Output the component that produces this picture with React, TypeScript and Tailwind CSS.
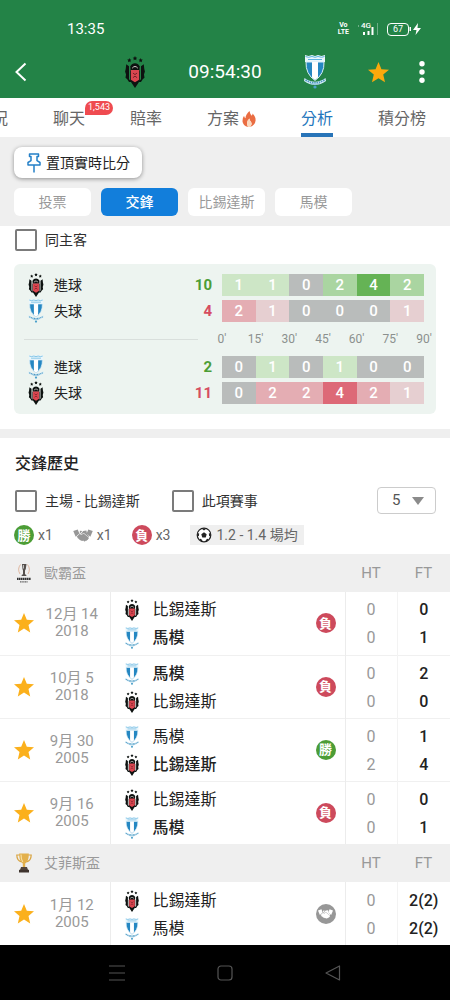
import React, { useState } from "react";

type Team = "bjk" | "mff";
type Result = "win" | "draw" | "loss";

interface Match {
  date: string;
  year: string;
  teams: [Team, Team];
  winner: Team | null;
  result: Result;
  ht: [string, string];
  ft: [string, string];
}

const teamNames: Record<Team, string> = {
  bjk: "比錫達斯",
  mff: "馬模",
};

const tabs = ["賽況", "聊天", "賠率", "方案", "分析", "積分榜"];
const chips = ["投票", "交鋒", "比錫達斯", "馬模"];

const goalColors: Record<number, string> = {
  0: "bg-[#b9bcbb]",
  1: "bg-[#cde6c6]",
  2: "bg-[#aad5a1]",
  4: "bg-[#65b355]",
};

const concededColors: Record<number, string> = {
  0: "bg-[#b9bcbb]",
  1: "bg-[#e6cfd1]",
  2: "bg-[#e4adb3]",
  4: "bg-[#dd6977]",
};

const leagues: { name: string; icon: React.ReactNode; matches: Match[] }[] = [
  {
    name: "歐霸盃",
    icon: <EuropaIcon />,
    matches: [
      { date: "12月 14", year: "2018", teams: ["bjk", "mff"], winner: "mff", result: "loss", ht: ["0", "0"], ft: ["0", "1"] },
      { date: "10月 5", year: "2018", teams: ["mff", "bjk"], winner: "mff", result: "loss", ht: ["0", "0"], ft: ["2", "0"] },
      { date: "9月 30", year: "2005", teams: ["mff", "bjk"], winner: "bjk", result: "win", ht: ["0", "2"], ft: ["1", "4"] },
      { date: "9月 16", year: "2005", teams: ["bjk", "mff"], winner: "mff", result: "loss", ht: ["0", "0"], ft: ["0", "1"] },
    ],
  },
  {
    name: "艾菲斯盃",
    icon: <TrophyIcon />,
    matches: [
      { date: "1月 12", year: "2005", teams: ["bjk", "mff"], winner: null, result: "draw", ht: ["0", "0"], ft: ["2(2)", "2(2)"] },
    ],
  },
];

function Crest({ team, className }: { team: Team; className: string }) {
  if (team === "bjk") {
    return (
      <svg viewBox="0 0 20 31" className={className} aria-hidden="true">
        <g fill="#0d1210">
          <path d="M4.500 2l.6 1.300 1.400.2-1 1 .2 1.500-1.200-.7-1.300.7.3-1.500-1-1 1.400-.2z" />
          <path d="M10 0l.7 1.400 1.500.2-1.100 1.100.3 1.500L10 3.500l-1.400.7.3-1.500-1.100-1.100 1.500-.2z" />
          <path d="M15.500 2l.6 1.300 1.400.2-1 1 .2 1.500-1.200-.7-1.300.7.3-1.500-1-1 1.400-.2z" />
          <path d="M1.500 8l2.700 2v12.500l2.800 2.800H4.200L2.500 22.500.8 21l.5-3-.9-3 .6-2.500z" />
          <path d="M18.500 8l-2.700 2v12.500l-2.800 2.800h2.800l1.700-2.800 1.700-1.500-.5-3 .9-3-.6-2.500z" />
          <path d="M5.500 10Q7 7 10 7t4.500 3l-.2 4H5.700z" />
          <path d="M5.300 14h9.400v10L10 31l-4.700-7z" />
        </g>
        <path d="M6 13.500h8v9.500l-4 2.500L6 23z" fill="#dc4650" />
        <path d="M7.300 11.800q2.700-3.300 5.400 0" stroke="#e6dcdc" strokeWidth=".9" fill="none" />
        <path d="M8 16.500l2 1.500 2-1.500M8 21l2-1.500 2 1.500" stroke="#6a2026" strokeWidth=".9" fill="none" />
      </svg>
    );
  }
  return (
    <svg viewBox="0 0 22 34" className={className} aria-hidden="true">
      <path d="M1 0l3.500 1L8 0l3 1 3-1 3.500 1L21 0v7H1z" fill="#eaf6fc" />
      <path d="M1.500 1.500l3 .8 3.500-.8 3 .8 3-.8 3.500.8 3-.8M4 4.500h14" stroke="#5db2de" strokeWidth="1" fill="none" />
      <path d="M2 7h18q.5 12-9 18.500Q1.500 19 2 7z" fill="#2587c2" stroke="#d8eef9" strokeWidth="1" />
      <path d="M8 7h6v15.500L11 25l-3-2.500z" fill="#fff" />
      <path d="M.5 23q10.500 7.500 21 0l.5 3q-11 8-22 0z" fill="#d5edf8" />
      <path d="M1.500 25q9.500 5.500 19 0" stroke="#4d97c0" strokeWidth="1.600" strokeDasharray="1.500 .8" fill="none" />
      <path d="M6.500 28.500q4.500 1.500 9 0" stroke="#4d97c0" strokeWidth=".9" strokeDasharray="1.200 .8" fill="none" />
      <circle cx="11" cy="32" r="1.600" fill="#4ba0ca" />
    </svg>
  );
}

function Star({ className }: { className: string }) {
  return (
    <svg viewBox="0 0 20 20" className={className} fill="currentColor" aria-hidden="true">
      <path d="M10 0l2.800 6.800 7.200.5-5.500 4.700 1.700 7.400L10 15.400l-6.200 4 1.700-7.400L0 7.300l7.200-.5z" />
    </svg>
  );
}

function Handshake({ className }: { className: string }) {
  return (
    <svg viewBox="0 0 24 16" className={className} fill="currentColor" aria-hidden="true">
      <path d="M0 2.500L5.500.500l2 5-4.500 4z" />
      <path d="M24 2.500L18.500.500l-2 5 4.500 4z" />
      <path d="M8.200 2.200l3 .4-2.800 3q.3 2 2.400 1.300l2-1.400 6.400 5.300q.4 1.300-.9 1.600.1 1.300-1.400 1.300-.4 1.200-1.700.8-.8 1.200-2 .5l-1-.7q-1.300 1-2.300-.2-1.300.3-1.600-.9-1.400.2-1.500-1.100-1.500 0-1.300-1.400L4.200 9.400l3.800-3.600z" />
      <path d="M12.200 2.500l4-.6.8 4 2.500 3-.9.9-5.600-4.800-2.400 1.300q-1 .2-1-.6z" />
    </svg>
  );
}

function Ball() {
  return (
    <svg viewBox="0 0 16 16" className="size-4" aria-hidden="true">
      <circle cx="8" cy="8" r="6.800" fill="#fff" stroke="#222" strokeWidth="1.200" />
      <g fill="#222">
        <path d="M8 5.200l2.700 2-1 3.200H6.300l-1-3.200z" />
        <path d="M5.500 1.600h5L8 3.400z" />
        <path d="M1.200 6l2 .4-.3 2.600-1.600.6z" />
        <path d="M14.800 6l-2 .4.300 2.600 1.600.6z" />
        <path d="M3.200 12.300l1.700-.6 1.500 1.700-.4 1.400z" />
        <path d="M12.800 12.300l-1.700-.6-1.500 1.700.4 1.400z" />
      </g>
    </svg>
  );
}

function EuropaIcon() {
  return (
    <svg viewBox="0 0 16 20" className="h-5 w-4" aria-hidden="true">
      <path d="M4.500 1.500Q1 6 4 11M11.500 1.500Q15 6 12 11" fill="none" stroke="#dba88c" strokeWidth=".8" />
      <path d="M6 1h4.500l-.7 5L9 7.500v4h1l.5 1.500h-5l.5-1.500h1v-4L6.500 6z" fill="#55504d" />
      <path d="M7.500 2v3.500" stroke="#ddd" strokeWidth=".8" />
      <path d="M1 15.800h14" stroke="#333" strokeWidth="2.200" strokeDasharray="1.600 .4" />
      <path d="M4 18.800h8" stroke="#666" strokeWidth="1.200" strokeDasharray="1.200 .4" />
    </svg>
  );
}

function TrophyIcon() {
  return (
    <svg viewBox="0 0 16 20" className="h-5 w-4" aria-hidden="true">
      <path d="M4 2H.8q0 5.500 4.700 7M12 2h3.200q0 5.500-4.700 7" fill="none" stroke="#d9a441" strokeWidth="1.200" />
      <path d="M3.200.5h9.600q.2 8-3.600 10v4H6.800v-4Q3 8.500 3.200.5z" fill="#e3b04b" />
      <path d="M5 1.500q0 5 1.800 7.500" fill="none" stroke="#f8dea0" strokeWidth="1.200" />
      <path d="M5 14h6l1 3H4z" fill="#54463c" />
      <path d="M3 16.800h10v2.700H3z" fill="#3f342e" />
    </svg>
  );
}

function ResultBadge({ result }: { result: Result }) {
  if (result === "draw") {
    return (
      <span className="inline-flex size-5 items-center justify-center rounded-full bg-[#979797] text-white">
        <Handshake className="h-2.5 w-[15px]" />
      </span>
    );
  }
  return (
    <span
      className={`inline-flex size-5 items-center justify-center rounded-full text-[13px] leading-none font-bold text-white ${
        result === "win" ? "bg-[#4c9d36]" : "bg-[#cd4a5c]"
      }`}
    >
      {result === "win" ? "勝" : "負"}
    </span>
  );
}

function CheckOption({ label }: { label: string }) {
  return (
    <label className="flex items-center gap-2 text-sm text-[#303030]">
      <input
        type="checkbox"
        className="size-[22px] appearance-none rounded-xs border-2 border-[#7b7b7b] bg-white checked:bg-[#127edb]"
      />
      {label}
    </label>
  );
}

function StatRow({ team, label, values }: { team: Team; label: string; values: number[] }) {
  const scored = label === "進球";
  const colors = scored ? goalColors : concededColors;
  const total = values.reduce((sum, v) => sum + v, 0);

  return (
    <div className="flex h-[22px] items-center">
      <div className="flex flex-1 items-center pr-2.5 pl-2">
        <Crest team={team} className="h-6 w-4" />
        <span className="ml-2.5 flex-1 text-sm text-[#222]">{label}</span>
        <span className={`text-[15px] font-bold ${scored ? "text-[#4c9d36]" : "text-[#d64d60]"}`}>{total}</span>
      </div>
      <div className="flex h-full w-1/2 items-stretch">
        {values.map((v, i) => (
          <span
            key={i}
            className={`flex flex-1 items-center justify-center text-[15px] font-medium text-white ${colors[v]}`}
          >
            {v}
          </span>
        ))}
      </div>
    </div>
  );
}

function StatusBar() {
  return (
    <div className="flex h-[46px] items-end justify-between pr-7 pl-[67px] text-white">
      <span className="h-7 text-[15px] leading-[22px]">13:35</span>
      <div className="flex h-7 items-center gap-2 pb-1.5">
        <span className="flex flex-col text-center text-[7px] leading-[7px] font-bold">
          <span>Vo</span>
          <span>LTE</span>
        </span>
        <span className="relative flex h-[14px] w-[22px] items-end">
          <span className="absolute top-0 left-1 text-[8px] leading-[7px] font-medium">4G</span>
          <svg viewBox="0 0 22 14" className="h-[14px] w-[22px]" aria-hidden="true">
            <path d="M6 10h2v3H6zM10.500 9h2v4h-2zM14.500 5h2v8h-2z" fill="#fff" />
            <path d="M1.500 3v2M20.500 1v12" stroke="#fff" strokeOpacity=".35" />
          </svg>
        </span>
        <span className="flex items-center">
          <span className="flex h-[13px] w-[22px] items-center justify-center rounded border border-white text-[9px] leading-none">
            67
          </span>
          <svg viewBox="0 0 13 14" className="h-[14px] w-[13px]" fill="#fff" aria-hidden="true">
            <path d="M.5 5h1.500v4H.500zM9 1L4 8h3.500L6.500 13 12 6H8.500z" />
          </svg>
        </span>
      </div>
    </div>
  );
}

function AppBar() {
  return (
    <div className="grid h-[52px] grid-cols-[1fr_auto_1fr] items-center text-white">
      <div className="flex pl-3.5">
        <button type="button" aria-label="返回">
          <svg viewBox="0 0 14 20" className="h-5 w-3.5" fill="none" stroke="currentColor" strokeWidth="2" aria-hidden="true">
            <path d="M11.500 1.500L2.500 10l9 8.500" />
          </svg>
        </button>
      </div>
      <div className="flex items-center gap-[42px]">
        <Crest team="bjk" className="h-8 w-[22px]" />
        <span className="text-[19px]">09:54:30</span>
        <Crest team="mff" className="h-[34px] w-[22px]" />
      </div>
      <div className="flex items-center justify-between pr-[25px] pl-[42px]">
        <button type="button" aria-label="收藏" className="text-[#fba90c]">
          <Star className="size-[21px]" />
        </button>
        <button type="button" aria-label="更多">
          <svg viewBox="0 0 6 22" className="h-[22px] w-1.5" fill="currentColor" aria-hidden="true">
            <circle cx="3" cy="2.700" r="2.700" />
            <circle cx="3" cy="11" r="2.700" />
            <circle cx="3" cy="19.300" r="2.700" />
          </svg>
        </button>
      </div>
    </div>
  );
}

function TabBar() {
  const [active, setActive] = useState("分析");

  return (
    <nav className="h-[39px] overflow-hidden bg-white">
      <div className="-ml-6 flex h-full gap-[45px]">
        {tabs.map((tab) => (
          <button
            key={tab}
            type="button"
            onClick={() => setActive(tab)}
            className={`relative flex shrink-0 items-center gap-[3px] border-b-4 pt-1.5 text-base ${
              tab === active ? "border-[#2874b8] text-[#2477bd]" : "border-transparent text-[#666]"
            }`}
          >
            {tab}
            {tab === "聊天" && (
              <span className="absolute top-[3px] left-8 flex h-[14px] items-center rounded-full rounded-bl-sm bg-[#ef4b50] px-[3px] text-[9px] text-white">
                1,543
              </span>
            )}
            {tab === "方案" && (
              <svg viewBox="0 0 15 17" className="h-4 w-3.5" aria-hidden="true">
                <path d="M8 0q.5 3 2.500 5 .8-.7.8-2.300Q15 6.500 14.500 10.500 14 15.500 8.500 17 11.500 14 9.500 11.500 8 10 8 8 5.500 10 5.500 12.500T6.500 17Q1 15.500.5 10.800.3 7.500 2.200 5q.2 2 1.500 2.800Q4 3.500 8 0z" fill="#ea6d42" />
                <path d="M8 8q0 2 1.500 3.500 2 2.500-1 5.500h-2Q5 14.500 5.500 12.500 5.700 10 8 8z" fill="#fbd9bd" />
              </svg>
            )}
          </button>
        ))}
      </div>
    </nav>
  );
}

function FilterBar() {
  const [active, setActive] = useState("交鋒");

  return (
    <div className="bg-[#efefef] px-3.5 pt-2.5 pb-2.5">
      <button
        type="button"
        className="flex h-[31px] items-center gap-1 rounded-lg bg-white pr-3 pl-3 text-sm text-[#222] shadow-[0_1px_4px_rgba(0,0,0,0.4)]"
      >
        <svg viewBox="0 0 16 20" className="h-5 w-4" fill="none" stroke="#2580c8" strokeWidth="1.500" strokeLinejoin="round" aria-hidden="true">
          <path d="M3.500 1h9v2.500h-1.500v4.200L14 9.500V12H2V9.500l3-1.800V3.500H3.500zM8 12v7.500" />
        </svg>
        置頂實時比分
      </button>
      <div className="mt-2.5 flex gap-2.5">
        {chips.map((chip) => (
          <button
            key={chip}
            type="button"
            onClick={() => setActive(chip)}
            className={`h-7 w-[77px] rounded-md text-sm ${
              chip === active ? "bg-[#127edb] font-medium text-white" : "bg-white text-[#999]"
            }`}
          >
            {chip}
          </button>
        ))}
      </div>
    </div>
  );
}

function GoalStats() {
  return (
    <section className="px-3.5 pt-[3px] pb-[15px]">
      <div className="ml-px">
        <CheckOption label="同主客" />
      </div>
      <div className="mt-[13px] rounded-md bg-[#edf4f0] py-2.5 pr-3 pl-1.5">
        <div className="space-y-1">
          <StatRow team="bjk" label="進球" values={[1, 1, 0, 2, 4, 2]} />
          <StatRow team="mff" label="失球" values={[2, 1, 0, 0, 0, 1]} />
        </div>
        <div className="flex h-[34px] items-center">
          <div className="flex-1 pr-6 pl-1">
            <hr className="border-[#d9dfdc]" />
          </div>
          <div className="flex w-1/2 justify-between text-xs text-[#8b908e]">
            {["0'", "15'", "30'", "45'", "60'", "75'", "90'"].map((t) => (
              <span key={t} className="flex w-0 justify-center">
                {t}
              </span>
            ))}
          </div>
        </div>
        <div className="space-y-1">
          <StatRow team="mff" label="進球" values={[0, 1, 0, 1, 0, 0]} />
          <StatRow team="bjk" label="失球" values={[0, 2, 2, 4, 2, 1]} />
        </div>
      </div>
    </section>
  );
}

function HistoryHeader() {
  return (
    <section className="border-t-[9px] border-[#efefef] px-3.5 pt-[14px] pb-[9px]">
      <div className="ml-px flex flex-col gap-[11px]">
        <h2 className="text-base font-medium text-[#222]">交鋒歷史</h2>
        <div className="flex items-center">
          <CheckOption label="主場 - 比錫達斯" />
          <div className="ml-8">
            <CheckOption label="此項賽事" />
          </div>
          <div className="relative ml-auto">
            <select
              aria-label="場數"
              defaultValue="5"
              className="h-[27px] w-[59px] appearance-none rounded-sm border border-[#ccc] bg-white pl-3.5 text-[15px] text-[#555]"
            >
              <option>5</option>
              <option>10</option>
              <option>20</option>
            </select>
            <svg viewBox="0 0 12 8" className="pointer-events-none absolute top-2.5 right-3 h-2 w-3" fill="#8b8b8b" aria-hidden="true">
              <path d="M0 0h12L6 8z" />
            </svg>
          </div>
        </div>
      </div>
      <div className="mt-[11px] flex h-5 items-center text-sm text-[#666]">
        <ResultBadge result="win" />
        <span className="ml-1">x1</span>
        <Handshake className="ml-5 h-[13px] w-5 text-[#979797]" />
        <span className="ml-1">x1</span>
        <span className="ml-5 flex">
          <ResultBadge result="loss" />
        </span>
        <span className="ml-1">x3</span>
        <span className="ml-5 flex h-5 items-center gap-1 bg-[#efefef] px-1.5">
          <Ball />
          1.2 - 1.4 場均
        </span>
      </div>
    </section>
  );
}

function MatchRow({ match }: { match: Match }) {
  return (
    <tr className="h-[63px] border-b border-[#f0f0f0] last:border-b-0">
      <td className="pl-3.5">
        <button type="button" aria-label="收藏" className="flex text-[#fbb01c]">
          <Star className="size-5" />
        </button>
      </td>
      <td className="border-r border-[#ececec] pr-2.5 text-center text-[15px] leading-[17px] text-[#999]">
        <div className="whitespace-nowrap">{match.date}</div>
        <div>{match.year}</div>
      </td>
      <td className="pt-0.5 pl-3">
        {match.teams.map((team) => (
          <div key={team} className="flex h-7 items-center gap-3">
            <Crest team={team} className="h-[22px] w-[18px]" />
            <span className={`text-base text-[#222] ${match.winner === team ? "font-medium" : ""}`}>
              {teamNames[team]}
            </span>
          </div>
        ))}
      </td>
      <td className="border-r border-[#ececec] pr-[9px]">
        <div className="flex justify-end">
          <ResultBadge result={match.result} />
        </div>
      </td>
      <td className="border-r border-[#f3f3f3] pt-0.5 text-center text-base leading-7 text-[#999]">
        <div>{match.ht[0]}</div>
        <div>{match.ht[1]}</div>
      </td>
      <td className="pt-0.5 text-center text-base leading-7 font-medium text-[#222]">
        <div>{match.ft[0]}</div>
        <div>{match.ft[1]}</div>
      </td>
    </tr>
  );
}

function HistoryTable() {
  return (
    <table className="w-full table-fixed border-collapse">
      <colgroup>
        <col className="w-11" />
        <col className="w-[66px]" />
        <col />
        <col className="w-10" />
        <col className="w-[52px]" />
        <col className="w-[53px]" />
      </colgroup>
      {leagues.map((league) => (
        <tbody key={league.name}>
          <tr className="h-[38px] bg-[#efefef] text-[15px] text-[#999]">
            <th colSpan={4} className="pl-4 text-left font-normal">
              <div className="flex items-center gap-3 text-sm">
                {league.icon}
                {league.name}
              </div>
            </th>
            <th className="font-normal">HT</th>
            <th className="font-normal">FT</th>
          </tr>
          {league.matches.map((match) => (
            <MatchRow key={match.date} match={match} />
          ))}
        </tbody>
      ))}
    </table>
  );
}

function SystemNav() {
  return (
    <nav className="flex h-[55px] items-center justify-center gap-[92px] bg-black text-[#555]">
      <button type="button" aria-label="最近">
        <svg viewBox="0 0 16 16" className="size-4" fill="none" stroke="currentColor" strokeWidth="1.200" aria-hidden="true">
          <path d="M0 1h16M0 8h16M0 15h16" />
        </svg>
      </button>
      <button type="button" aria-label="主頁">
        <svg viewBox="0 0 16 16" className="size-4" fill="none" stroke="currentColor" strokeWidth="1.200" aria-hidden="true">
          <rect x="1" y="1" width="14" height="14" rx="3" />
        </svg>
      </button>
      <button type="button" aria-label="上一頁">
        <svg viewBox="0 0 16 16" className="size-4" fill="none" stroke="currentColor" strokeWidth="1.200" strokeLinejoin="round" aria-hidden="true">
          <path d="M14.500 1v14L1 8z" />
        </svg>
      </button>
    </nav>
  );
}

function App() {
  return (
    <div className="flex min-h-screen flex-col bg-white font-['Roboto','Noto_Sans_CJK_TC',sans-serif]">
      <header className="bg-[#238347]">
        <StatusBar />
        <AppBar />
      </header>
      <TabBar />
      <FilterBar />
      <main className="flex-1">
        <GoalStats />
        <HistoryHeader />
        <HistoryTable />
      </main>
      <SystemNav />
    </div>
  );
}

export default App;
